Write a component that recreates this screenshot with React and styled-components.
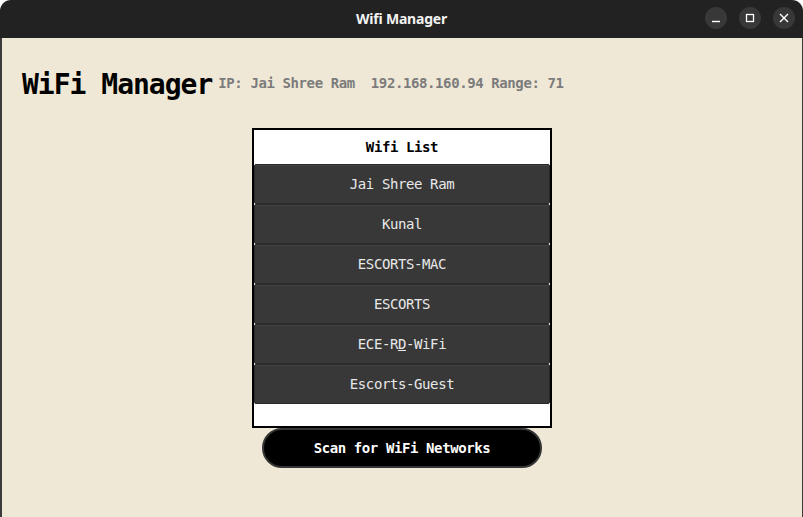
import styled, { createGlobalStyle } from "styled-components";

const GlobalStyle = createGlobalStyle`
  html, body {
    margin: 0;
    padding: 0;
    background: #ffffff;
  }
`;

const Window = styled.div`
  width: 803px;
  height: 517px;
  display: flex;
  flex-direction: column;
  overflow: hidden;
`;

const TitleBar = styled.div`
  height: 38px;
  flex: none;
  background: #222222;
  border-radius: 11px 11px 0 0;
  display: grid;
  grid-template-columns: 1fr auto 1fr;
  align-items: center;
`;

const WindowTitle = styled.div`
  grid-column: 2;
  color: #f2f2f2;
  font-family: "Noto Sans", "DejaVu Sans", sans-serif;
  font-weight: 700;
  font-size: 14px;
  letter-spacing: -0.2px;
  margin-top: -1px;
`;

const Controls = styled.div`
  grid-column: 3;
  justify-self: end;
  display: flex;
  gap: 12px;
  padding-right: 8px;
  margin-top: -2px;
`;

const CtrlButton = styled.div`
  width: 22px;
  height: 22px;
  border-radius: 50%;
  background: #383838;
  display: flex;
  align-items: center;
  justify-content: center;
`;

const Content = styled.div`
  flex: 1;
  background: #f0e8d6;
  border-left: 2px solid #3a3a3a;
  border-right: 1px solid #3a3a3a;
  display: flex;
  flex-direction: column;
  font-family: "DejaVu Sans Mono", "Liberation Mono", monospace;
`;

const Header = styled.div`
  display: flex;
  align-items: baseline;
  gap: 6px;
  padding: 30px 20px 0;
`;

const Title = styled.h1`
  margin: 0;
  font-size: 28px;
  line-height: 34px;
  letter-spacing: -1px;
  font-weight: 700;
  color: #000;
`;

const Info = styled.span`
  font-size: 14px;
  font-weight: 700;
  letter-spacing: -0.4px;
  color: #7c7c7c;
  white-space: pre;
  transform: translateY(-6px);
`;

const ListBox = styled.div`
  width: 296px;
  margin: 26px auto 0;
  border: 2px solid #000;
  background: #fff;
  display: flex;
  flex-direction: column;
  padding-bottom: 22px;
`;

const ListHeader = styled.div`
  height: 34px;
  display: flex;
  align-items: center;
  justify-content: center;
  font-size: 14px;
  font-weight: 700;
  letter-spacing: -0.4px;
  color: #000;
`;

const Item = styled.div`
  box-sizing: border-box;
  height: 40px;
  background: #383838;
  border: 1px solid #2a2a2a;
  box-shadow: inset 0 1px 0 #434343;
  border-radius: 2px;
  color: #e8e8e8;
  font-size: 14px;
  letter-spacing: -0.4px;
  display: flex;
  align-items: center;
  justify-content: center;
`;

const ScanButton = styled.button`
  width: 280px;
  height: 40px;
  margin: 0 auto;
  background: #000;
  border: 2px solid #353535;
  border-radius: 20px;
  color: #fff;
  font-family: "DejaVu Sans Mono", "Liberation Mono", monospace;
  font-size: 14px;
  font-weight: 700;
  letter-spacing: -0.4px;
  cursor: pointer;
`;

const networks = [
  "Jai Shree Ram",
  "Kunal",
  "ESCORTS-MAC",
  "ESCORTS",
  <>ECE-R<u>D</u>-WiFi</>,
  "Escorts-Guest",
];

export default function App() {
  return (
    <>
      <GlobalStyle />
      <Window>
        <TitleBar>
          <WindowTitle>Wifi Manager</WindowTitle>
          <Controls>
            <CtrlButton>
              <svg width="10" height="10" viewBox="0 0 10 10">
                <line x1="1" y1="8.5" x2="9" y2="8.5" stroke="#fff" strokeWidth="1.4" />
              </svg>
            </CtrlButton>
            <CtrlButton>
              <svg width="10" height="10" viewBox="0 0 10 10">
                <rect x="1.5" y="1.5" width="7" height="7" fill="none" stroke="#fff" strokeWidth="1.3" />
              </svg>
            </CtrlButton>
            <CtrlButton>
              <svg width="10" height="10" viewBox="0 0 10 10">
                <path d="M1 1 L9 9 M9 1 L1 9" stroke="#fff" strokeWidth="1.4" />
              </svg>
            </CtrlButton>
          </Controls>
        </TitleBar>
        <Content>
          <Header>
            <Title>WiFi Manager</Title>
            <Info>IP: Jai Shree Ram  192.168.160.94 Range: 71</Info>
          </Header>
          <ListBox>
            <ListHeader>Wifi List</ListHeader>
            {networks.map((name, i) => (
              <Item key={i}>{name}</Item>
            ))}
          </ListBox>
          <ScanButton>Scan for WiFi Networks</ScanButton>
        </Content>
      </Window>
    </>
  );
}
